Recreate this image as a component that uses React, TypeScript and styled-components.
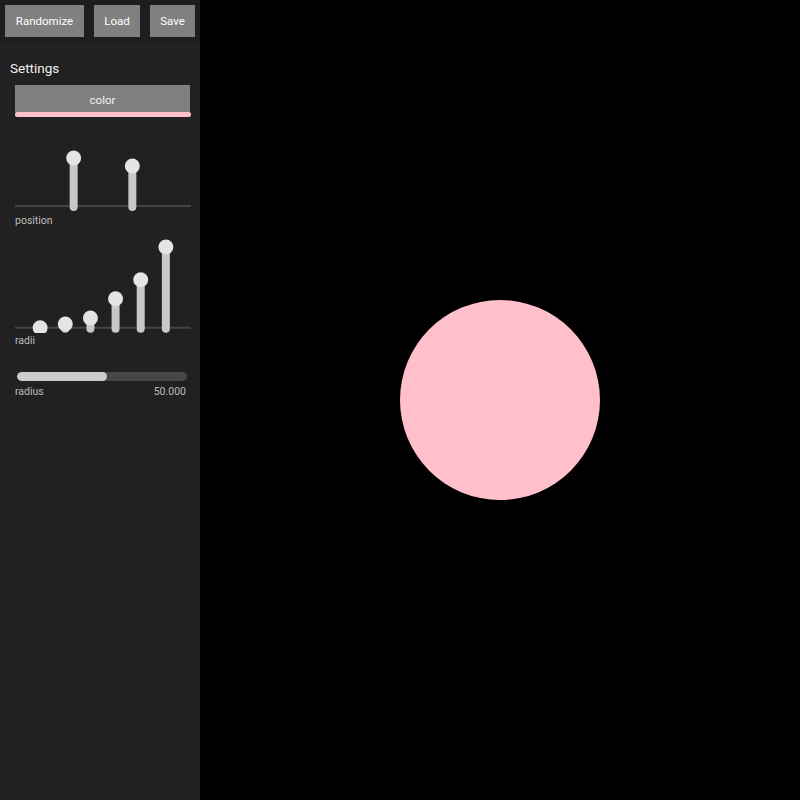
import React from "react";
import styled, { createGlobalStyle } from "styled-components";

const Global = createGlobalStyle`
  html, body { margin: 0; padding: 0; background: #000; }
  body { font-family: Roboto, "Liberation Sans", sans-serif; }
`;

const Layout = styled.div`
  display: flex;
  width: 800px;
  height: 800px;
`;

const Sidebar = styled.aside`
  width: 200px;
  flex: none;
  background: #212121;
  display: flex;
  flex-direction: column;
`;

const Toolbar = styled.div`
  display: flex;
  gap: 10px;
  padding: 5px;
  height: 42px;
  box-sizing: border-box;
  background: #1e1e1e;
`;

const Button = styled.button<{ $w: number }>`
  width: ${(p) => p.$w}px;
  height: 32px;
  padding: 0;
  border: none;
  background: #808080;
  color: #fff;
  font-family: Roboto, "Liberation Sans", sans-serif;
  font-size: 11.5px;
  cursor: pointer;
`;

const Panel = styled.div`
  display: flex;
  flex-direction: column;
  padding: 0 10px;
`;

const Title = styled.div`
  color: #f0f0f0;
  font-size: 13.5px;
  line-height: 20px;
  margin-top: 16px;
`;

const Controls = styled.div`
  margin-left: 5px;
  width: 176px;
  display: flex;
  flex-direction: column;
`;

const ColorButton = styled.div`
  margin-top: 7px;
  width: 175px;
  height: 27px;
  box-sizing: border-box;
  padding-top: 3px;
  background: #808080;
  color: #f4f4f4;
  font-size: 11.5px;
  display: flex;
  align-items: center;
  justify-content: center;
`;

const Swatch = styled.div<{ $color: string }>`
  width: 176px;
  height: 5px;
  border-radius: 2px;
  background: ${(p) => p.$color};
`;

const ChartSvg = styled.svg<{ $top: number }>`
  display: block;
  margin-top: ${(p) => p.$top}px;
`;

const Label = styled.div<{ $top?: number }>`
  color: #bdbdbd;
  font-size: 10.5px;
  line-height: 13px;
  margin-top: ${(p) => p.$top ?? 0}px;
  display: flex;
  justify-content: space-between;
`;

const SliderTrack = styled.div`
  margin-top: 25px;
  margin-left: 2px;
  width: 170px;
  height: 9px;
  border-radius: 5px;
  background: #474747;
  overflow: hidden;
`;

const SliderFill = styled.div`
  height: 100%;
  border-radius: 5px;
  background: #cccccc;
`;

const SliderLabel = styled(Label)`
  width: 171px;
`;

const Canvas = styled.main`
  flex: 1;
  background: #000;
  display: flex;
  align-items: center;
  justify-content: center;
`;

const Circle = styled.div<{ $r: number; $color: string }>`
  width: ${(p) => p.$r * 2}px;
  height: ${(p) => p.$r * 2}px;
  border-radius: 50%;
  background: ${(p) => p.$color};
`;

type ChartProps = { xs: number[]; ys: number[]; baseline: number; height: number; top: number };

function StemChart({ xs, ys, baseline, height, top }: ChartProps) {
  return (
    <ChartSvg width={176} height={height} $top={top}>
      <line x1={0} x2={176} y1={baseline} y2={baseline} stroke="#444" strokeWidth={2} />
      {xs.map((x, i) => (
        <g key={i}>
          <line x1={x} x2={x} y1={ys[i]} y2={baseline + 1} stroke="#c8c8c8" strokeWidth={8} strokeLinecap="round" />
          <circle cx={x} cy={ys[i]} r={7.5} fill="#e4e4e4" />
        </g>
      ))}
    </ChartSvg>
  );
}

export default function App() {
  const w = 176;
  return (
    <>
      <Global />
      <Layout>
        <Sidebar>
          <Toolbar>
            <Button $w={79}>Randomize</Button>
            <Button $w={46}>Load</Button>
            <Button $w={45}>Save</Button>
          </Toolbar>
          <Panel>
            <Title>Settings</Title>
            <Controls>
              <ColorButton>color</ColorButton>
              <Swatch $color="#ffc0cb" />
              <StemChart xs={[w / 3, (2 * w) / 3]} ys={[13, 21]} baseline={61} height={67} top={28} />
              <Label $top={2}>position</Label>
              <StemChart
                xs={[1, 2, 3, 4, 5, 6].map((i) => (i * w) / 7)}
                ys={[90.7, 87, 81, 61.7, 42.7, 10]}
                baseline={90.7}
                height={96}
                top={10}
              />
              <Label $top={1}>radii</Label>
              <SliderTrack>
                <SliderFill style={{ width: "53%" }} />
              </SliderTrack>
              <SliderLabel $top={4}>
                <span>radius</span>
                <span>50.000</span>
              </SliderLabel>
            </Controls>
          </Panel>
        </Sidebar>
        <Canvas>
          <Circle $r={100} $color="#ffc0cb" />
        </Canvas>
      </Layout>
    </>
  );
}
